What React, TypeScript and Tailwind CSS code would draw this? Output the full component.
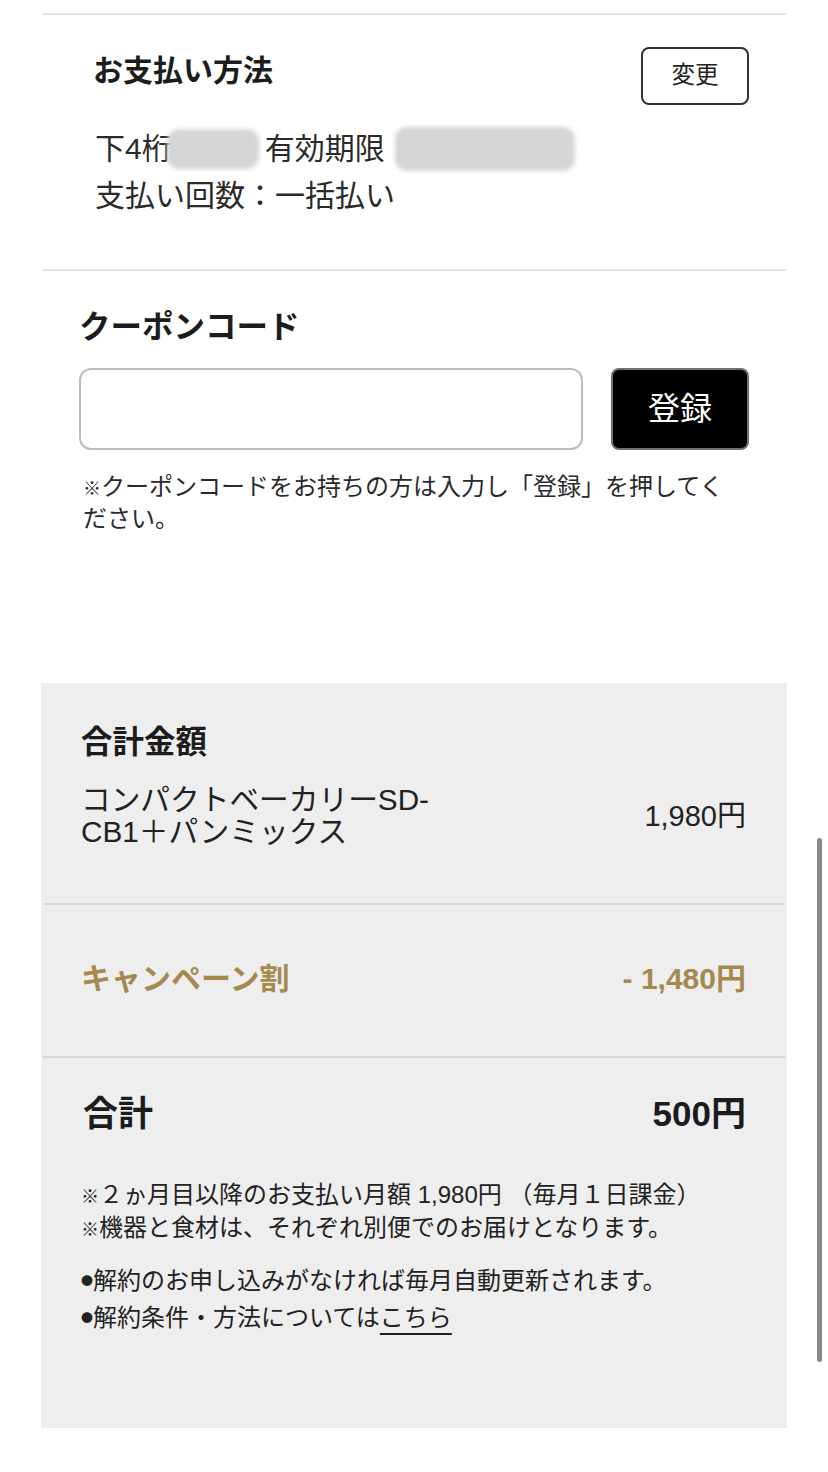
import React from 'react';

const FONT = { fontFamily: '"Liberation Sans", "Noto Sans CJK JP", sans-serif' };

// Blurred blob used to hide card details
const Redacted: React.FC<{ className?: string }> = ({ className = '' }) => (
  <span className={`inline-block align-middle rounded-[12px] bg-[#d5d5d5] blur-[2px] ${className}`} />
);

// Narrow reference mark as used in the notes
const Kome: React.FC = () => <span className="text-[18px] leading-none">※</span>;

const Dot: React.FC = () => (
  <span className="font-['Noto_Sans_CJK_JP'] text-[12px] leading-none align-[3px]">●</span>
);

const PaymentMethod: React.FC = () => (
  <div className="pt-[32px] pb-[50px] pl-[52px] pr-[38px]">
    <div className="flex items-start justify-between">
      <h2 className="mt-[4px] text-[30px] leading-[40px] font-bold text-[#1c1c1c]">お支払い方法</h2>
      <button className="w-[108px] h-[58px] rounded-[8px] border-2 border-[#333] text-[23.5px] text-[#222] bg-white">
        変更
      </button>
    </div>
    <div className="mt-[20px] pl-[2px] text-[30px] leading-[47px] text-[#2a2a2a]">
      <p className="flex items-center whitespace-nowrap">
        <span>下4桁</span>
        <Redacted className="-ml-[5px] w-[92px] h-[40px]" />
        <span className="ml-[6px]">有効期限</span>
        <span className="text-[#bbb]">：</span>
        <Redacted className="-ml-[20px] w-[180px] h-[44px]" />
      </p>
      <p>支払い回数：一括払い</p>
    </div>
  </div>
);

const Coupon: React.FC = () => (
  <div className="pt-[36px] px-[38px]">
    <h2 className="text-[31.5px] leading-[40px] font-bold text-[#1c1c1c]">クーポンコード</h2>
    <div className="mt-[21px] flex gap-[28px]">
      <input
        type="text"
        className="flex-1 h-[82px] rounded-[12px] border-2 border-[#bdbdbd] bg-white px-4 text-[24px] outline-none"
      />
      <button className="w-[138px] h-[82px] rounded-[8px] border-2 border-[#6f6f6f] bg-black text-white text-[32px]">
        登録
      </button>
    </div>
    <p className="mt-[21px] pl-[4px] w-[652px] text-[24px] leading-[32px] text-[#2a2a2a]">
      <Kome />クーポンコードをお持ちの方は入力し「登録」を押してください。
    </p>
  </div>
);

const Summary: React.FC = () => (
  <div className="mt-[148px] bg-[#eeeeee]">
    <div className="pt-[39px] pb-[55px] px-[40px]">
      <h2 className="text-[31.5px] leading-[40px] font-bold text-[#1c1c1c]">合計金額</h2>
      <div className="mt-[22px] flex items-center justify-between text-[#222]">
        <p className="w-[370px] text-[29.7px] leading-[32px]">コンパクトベーカリーSD-CB1＋パンミックス</p>
        <p className="text-[29px] leading-[32px] pr-[1px]">1,980円</p>
      </div>
    </div>
    <div className="mx-[2px] border-t-2 border-[#d8d8d8]" />
    <div className="pt-[54px] pb-[57px] px-[40px] flex items-center justify-between text-[#a5894f] font-bold">
      <p className="text-[30px] leading-[40px]">キャンペーン割</p>
      <p className="text-[30px] leading-[40px] pr-[1px]">- 1,480円</p>
    </div>
    <div className="mx-[2px] border-t-2 border-[#d8d8d8]" />
    <div className="pt-[34px] pb-[92px] px-[40px] text-[#222]">
      <div className="flex items-center justify-between font-bold text-[#1c1c1c]">
        <p className="pl-[2px] text-[35px] leading-[44px]">合計</p>
        <p className="text-[35px] leading-[44px] pr-[1px]">500円</p>
      </div>
      <div className="mt-[42px] text-[24px] leading-[33px]">
        <p>
          <Kome />２ゕ月目以降のお支払い月額 1,980円 （毎月１日課金）
        </p>
        <p>
          <Kome />機器と食材は、それぞれ別便でのお届けとなります。
        </p>
      </div>
      <div className="mt-[18px] text-[24px] leading-[37px]">
        <p>
          <Dot />解約のお申し込みがなければ毎月自動更新されます。
        </p>
        <p>
          <Dot />解約条件・方法については
          <a href="#" className="underline decoration-2 underline-offset-[7px] text-[#222]">
            こちら
          </a>
        </p>
      </div>
    </div>
  </div>
);

export default function App() {
  return (
    <div className="relative w-[828px] min-h-[1472px] bg-white" style={FONT}>
      <div className="pt-[13px] px-[41px] pb-[44px]">
        <div className="mx-[1px] border-t-2 border-[#e6e6e6]" />
        <PaymentMethod />
        <div className="mx-[1px] border-t-2 border-[#e6e6e6]" />
        <Coupon />
        <Summary />
      </div>
      {/* scroll indicator */}
      <div className="absolute left-[817px] top-[838px] w-[5px] h-[524px] rounded-full bg-[#8a8a8a]" />
    </div>
  );
}
